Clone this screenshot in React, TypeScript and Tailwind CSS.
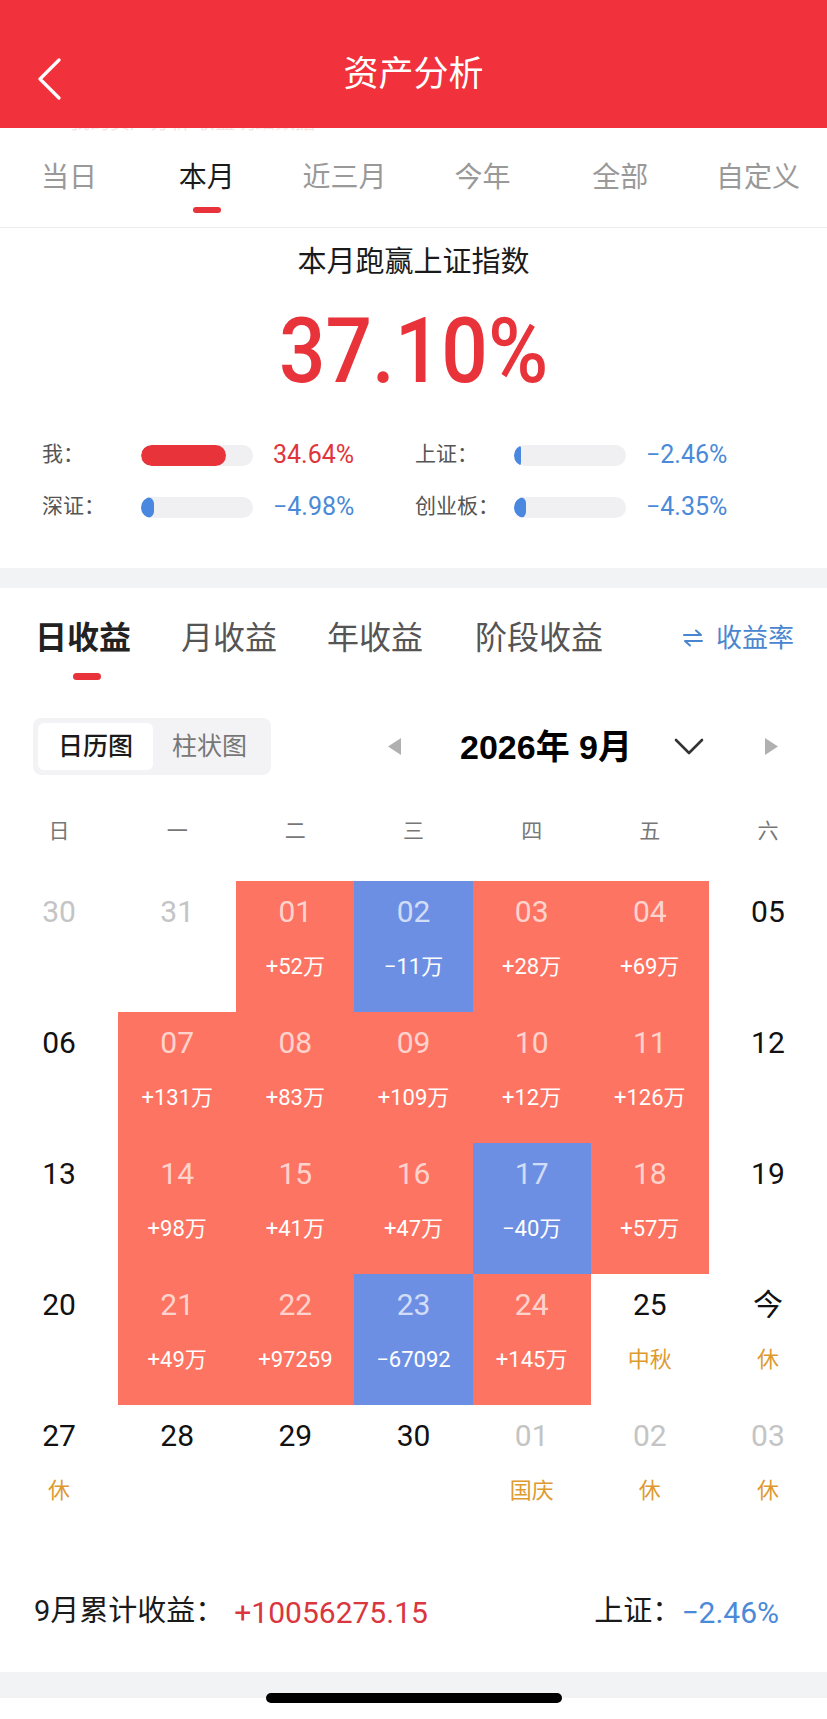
import React from "react";

type Cell = { d: string; sub?: string; kind: "red" | "blue" | "cur" | "other"; holiday?: boolean };

const rows: Cell[][] = [
  [
    { d: "30", kind: "other" },
    { d: "31", kind: "other" },
    { d: "01", sub: "+52万", kind: "red" },
    { d: "02", sub: "−11万", kind: "blue" },
    { d: "03", sub: "+28万", kind: "red" },
    { d: "04", sub: "+69万", kind: "red" },
    { d: "05", kind: "cur" },
  ],
  [
    { d: "06", kind: "cur" },
    { d: "07", sub: "+131万", kind: "red" },
    { d: "08", sub: "+83万", kind: "red" },
    { d: "09", sub: "+109万", kind: "red" },
    { d: "10", sub: "+12万", kind: "red" },
    { d: "11", sub: "+126万", kind: "red" },
    { d: "12", kind: "cur" },
  ],
  [
    { d: "13", kind: "cur" },
    { d: "14", sub: "+98万", kind: "red" },
    { d: "15", sub: "+41万", kind: "red" },
    { d: "16", sub: "+47万", kind: "red" },
    { d: "17", sub: "−40万", kind: "blue" },
    { d: "18", sub: "+57万", kind: "red" },
    { d: "19", kind: "cur" },
  ],
  [
    { d: "20", kind: "cur" },
    { d: "21", sub: "+49万", kind: "red" },
    { d: "22", sub: "+97259", kind: "red" },
    { d: "23", sub: "−67092", kind: "blue" },
    { d: "24", sub: "+145万", kind: "red" },
    { d: "25", sub: "中秋", kind: "cur", holiday: true },
    { d: "今", sub: "休", kind: "cur", holiday: true },
  ],
  [
    { d: "27", sub: "休", kind: "cur", holiday: true },
    { d: "28", kind: "cur" },
    { d: "29", kind: "cur" },
    { d: "30", kind: "cur" },
    { d: "01", sub: "国庆", kind: "other", holiday: true },
    { d: "02", sub: "休", kind: "other", holiday: true },
    { d: "03", sub: "休", kind: "other", holiday: true },
  ],
];

function CalCell({ c }: { c: Cell }) {
  const bg = c.kind === "red" ? "bg-[#fd7562]" : c.kind === "blue" ? "bg-[#6d8fe3]" : "bg-white";
  const dateColor =
    c.kind === "red" || c.kind === "blue"
      ? "text-white/70"
      : c.kind === "other"
      ? "text-[#c4c4c4]"
      : "text-[#111111]";
  const subColor = c.holiday ? "text-[#de9a2f]" : "text-white";
  return (
    <div className={`flex h-[131px] flex-col items-center ${bg}`}>
      <div className={`mt-[13px] h-[36px] text-[30px] leading-[36px] ${dateColor}`}>{c.d}</div>
      {c.sub ? (
        <div className={`mt-[23px] h-[28px] text-[22px] leading-[28px] ${subColor}`}>{c.sub}</div>
      ) : null}
    </div>
  );
}

function StatRow({
  label,
  fill,
  fillColor,
  value,
  valueColor,
}: {
  label: string;
  fill: number;
  fillColor: string;
  value: string;
  valueColor: string;
}) {
  return (
    <div className="flex h-[40px] items-center">
      <div className="w-[99px] text-[21px] text-[#555555]">{label}</div>
      <div className="h-[21px] w-[112px] overflow-hidden rounded-full bg-[#f0f0f2]">
        <div className={`h-full rounded-full ${fillColor}`} style={{ width: `${fill}px` }} />
      </div>
      <div className={`ml-[20px] text-[25px] ${valueColor}`}>{value}</div>
    </div>
  );
}

export default function App() {
  const topTabs = ["当日", "本月", "近三月", "今年", "全部", "自定义"];
  const week = ["日", "一", "二", "三", "四", "五", "六"];
  return (
    <div className="relative min-h-[1719px] w-[827px] overflow-hidden bg-white font-['Roboto','Noto_Sans_CJK_SC',sans-serif]">
      {/* Header */}
      <div className="relative flex h-[128px] items-center justify-center bg-[#f1313b]">
        <svg
          className="absolute left-[36px] top-[58px]"
          width="28"
          height="42"
          viewBox="0 0 28 42"
          fill="none"
        >
          <path d="M23 2 L4 21 L23 40" stroke="white" strokeWidth="3.2" strokeLinecap="round" strokeLinejoin="round" />
        </svg>
        <div className="mt-[22px] text-[35px] leading-[48px] text-white">资产分析</div>
      </div>

      {/* Top tabs */}
      <div className="relative grid h-[100px] grid-cols-6 border-b border-[#ececec]">
        <div className="absolute left-[70px] top-0 h-[5px] w-[260px] overflow-hidden opacity-20">
          <div className="-mt-[16px] text-[20px] leading-[20px] text-[#c77]">我的资产分析 收益明细数据</div>
        </div>
        {topTabs.map((t) => (
          <div key={t} className="relative flex items-center justify-center">
            <span
              className={
                t === "本月"
                  ? "text-[28px] leading-[36px] text-[#1a1a1a]"
                  : "text-[28px] leading-[36px] text-[#999999]"
              }
            >
              {t}
            </span>
            {t === "本月" ? (
              <div className="absolute left-1/2 top-[79px] h-[6px] w-[28px] -translate-x-1/2 rounded-full bg-[#e8333a]" />
            ) : null}
          </div>
        ))}
      </div>

      {/* Stats */}
      <div className="flex h-[340px] flex-col">
        <div className="mt-[14px] h-[40px] text-center text-[29px] leading-[40px] text-[#1a1a1a]">本月跑赢上证指数</div>
        <div className="mt-[19px] flex h-[100px] items-center justify-center">
          <div className="scale-x-90 text-[91px] font-medium leading-[100px] text-[#e8333a]">37.10%</div>
        </div>
        <div className="mt-[34px] grid grid-cols-[373px_1fr] gap-y-[12px] pl-[42px]">
          <StatRow label="我：" fill={85} fillColor="bg-[#e8333a]" value="34.64%" valueColor="text-[#e0353c]" />
          <StatRow label="上证：" fill={7} fillColor="bg-[#4a88e0]" value="−2.46%" valueColor="text-[#4a8ad8]" />
          <StatRow label="深证：" fill={13} fillColor="bg-[#4a88e0]" value="−4.98%" valueColor="text-[#4a8ad8]" />
          <StatRow label="创业板：" fill={12} fillColor="bg-[#4a88e0]" value="−4.35%" valueColor="text-[#4a8ad8]" />
        </div>
      </div>

      <div className="h-[20px] bg-[#f2f3f5]" />

      {/* Sub tabs */}
      <div className="flex flex-col">
        <div className="mt-[28px] flex h-[44px] items-center pl-[35px] pr-[33px]">
          <span className="text-[32px] font-bold leading-[44px] text-[#222222]">日收益</span>
          <span className="ml-[50px] text-[32px] leading-[44px] text-[#555555]">月收益</span>
          <span className="ml-[50px] text-[32px] leading-[44px] text-[#555555]">年收益</span>
          <span className="ml-[52px] text-[32px] leading-[44px] text-[#555555]">阶段收益</span>
          <span className="ml-auto flex items-center text-[26px] leading-[44px] text-[#4a86d0]">
            <svg width="20" height="18" viewBox="0 0 20 18" fill="none" className="mr-[13px]">
              <path d="M1 6 H18 L13 1.5" stroke="#4a86d0" strokeWidth="2" strokeLinecap="round" strokeLinejoin="round" />
              <path d="M19 12 H2 L7 16.5" stroke="#4a86d0" strokeWidth="2" strokeLinecap="round" strokeLinejoin="round" />
            </svg>
            收益率
          </span>
        </div>
        <div className="ml-[73px] mt-[13px] h-[7px] w-[28px] rounded-full bg-[#e8333a]" />

        {/* Toggle + month */}
        <div className="mt-[38px] flex h-[57px] items-center">
          <div className="ml-[33px] flex h-[57px] w-[238px] items-center rounded-[8px] bg-[#f3f3f5] p-[5px]">
            <div className="flex h-full w-[115px] items-center justify-center rounded-[6px] bg-white text-[25px] font-medium text-[#1a1a1a]">
              日历图
            </div>
            <div className="flex h-full flex-1 items-center justify-center text-[25px] text-[#777777]">柱状图</div>
          </div>
          <svg className="ml-[116px]" width="15" height="19" viewBox="0 0 15 19">
            <path d="M14 1 L1 9.5 L14 18 Z" fill="#b0b0b0" />
          </svg>
          <div className="ml-[58px] w-[172px] font-['Liberation_Sans','Noto_Sans_CJK_SC',sans-serif] text-[34px] font-bold leading-[40px] text-black">
            2026年 9月
          </div>
          <svg className="ml-[42px]" width="30" height="17" viewBox="0 0 30 17" fill="none">
            <path d="M2 2 L15 15 L28 2" stroke="#333333" strokeWidth="2.6" strokeLinecap="round" strokeLinejoin="round" />
          </svg>
          <svg className="ml-[60px]" width="15" height="19" viewBox="0 0 15 19">
            <path d="M1 1 L14 9.5 L1 18 Z" fill="#b0b0b0" />
          </svg>
        </div>

        {/* Week header */}
        <div className="mt-[37px] grid h-[40px] grid-cols-7">
          {week.map((w) => (
            <div key={w} className="flex items-center justify-center text-[21px] text-[#777777]">
              {w}
            </div>
          ))}
        </div>

        {/* Calendar */}
        <div className="mt-[29px] grid grid-cols-7">
          {rows.flat().map((c, i) => (
            <CalCell key={i} c={c} />
          ))}
        </div>

        {/* Summary */}
        <div className="mt-[56px] flex h-[40px] items-center pl-[34px] pr-[48px]">
          <span className="text-[29px] text-[#1a1a1a]">9月累计收益：</span>
          <span className="ml-[10px] text-[30px] text-[#d9363e]">+10056275.15</span>
          <span className="ml-auto text-[29px] text-[#1a1a1a]">上证：</span>
          <span className="text-[30px] text-[#4a8ad8]">−2.46%</span>
        </div>

        <div className="mt-[40px] h-[26px] bg-[#f2f3f5]" />
        <div className="h-[21px] bg-white" />
      </div>

      <div className="absolute left-[266px] top-[1693px] h-[10px] w-[296px] rounded-full bg-black" />
    </div>
  );
}
